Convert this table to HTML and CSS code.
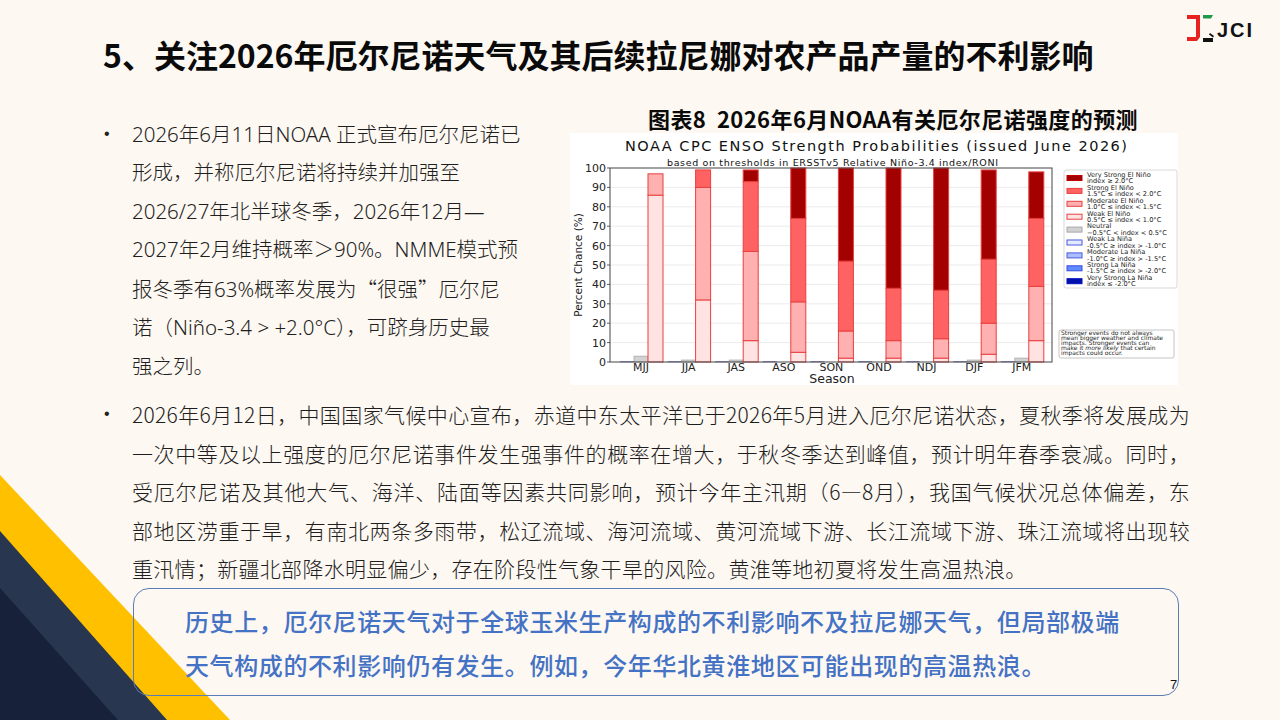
FILE: index.html
```html
<!DOCTYPE html>
<html lang="zh-CN">
<head>
<meta charset="utf-8">
<title>厄尔尼诺</title>
<link rel="stylesheet" href="styles.css">
</head>
<body>
<div class="slide">
  <svg class="deco" width="240" height="250" viewBox="0 0 240 250">
    <polygon points="0,5 230,250 0,250" fill="#FFC000"/>
    <polygon points="0,61 167,250 0,250" fill="#283650"/>
    <polygon points="0,118 118,250 0,250" fill="#17223a"/>
  </svg>

  <header class="top">
    <h1 class="title">5、关注2026年厄尔尼诺天气及其后续拉尼娜对农产品产量的不利影响</h1>
    <div class="logo">
      <svg class="logo-mark" width="28" height="30" viewBox="0 0 28 30">
        <path d="M1 2 H14 V24 L11 28 H1 V24 H10 V6 H1 Z" fill="#e8231f"/>
        <path d="M17 2 H27 L25 5.5 H17 Z" fill="#1f9a4a"/>
        <path d="M17 25 H27 V29 H17 Z" fill="#111"/>
        <path d="M24 20 L28 23 L27 24.5 L23 21.5 Z" fill="#111"/>
      </svg>
      <span class="logo-text">JCI</span>
    </div>
  </header>

  <section class="upper">
    <div class="left-col">
      <div class="item">
        <span class="dot">•</span>
        <p class="txt">2026年6月11日NOAA 正式宣布厄尔尼诺已<br>形成，并称厄尔尼诺将持续并加强至<br>2026/27年北半球冬季，2026年12月—<br>2027年2月维持概率＞90%。NMME模式预<br>报冬季有63%概率发展为<span class="cjk">“很强”</span>厄尔尼<br>诺（Niño-3.4 &gt; +2.0°C），可跻身历史最<br>强之列。</p>
      </div>
    </div>
    <figure class="figure">
      <figcaption class="cap">图表8&nbsp;&nbsp;2026年6月NOAA有关厄尔尼诺强度的预测</figcaption>
      <svg class="chart" width="608" height="252" viewBox="0 0 608 252" font-family="DejaVu Sans, sans-serif">
        <rect x="0" y="0" width="608" height="252" fill="#ffffff"/>
        <text x="306" y="18" font-size="14.5" text-anchor="middle" textLength="502" lengthAdjust="spacing" fill="#111">NOAA CPC ENSO Strength Probabilities (issued June 2026)</text>
        <text x="97" y="32.5" font-size="9.5" textLength="331" lengthAdjust="spacing" fill="#111">based on thresholds in ERSSTv5 Relative Niño-3.4 index/RONI</text>

        <g stroke="#e6e6e6" stroke-width="0.8">
          <line x1="40" y1="209.6" x2="482" y2="209.6"/>
          <line x1="40" y1="190.2" x2="482" y2="190.2"/>
          <line x1="40" y1="170.8" x2="482" y2="170.8"/>
          <line x1="40" y1="151.4" x2="482" y2="151.4"/>
          <line x1="40" y1="132" x2="482" y2="132"/>
          <line x1="40" y1="112.6" x2="482" y2="112.6"/>
          <line x1="40" y1="93.2" x2="482" y2="93.2"/>
          <line x1="40" y1="73.8" x2="482" y2="73.8"/>
          <line x1="40" y1="54.4" x2="482" y2="54.4"/>
        </g>

        <g font-size="11" text-anchor="end" fill="#222">
          <text x="36" y="233">0</text>
          <text x="36" y="213.6">10</text>
          <text x="36" y="194.2">20</text>
          <text x="36" y="174.8">30</text>
          <text x="36" y="155.4">40</text>
          <text x="36" y="136">50</text>
          <text x="36" y="116.6">60</text>
          <text x="36" y="97.2">70</text>
          <text x="36" y="77.8">80</text>
          <text x="36" y="58.4">90</text>
          <text x="36" y="39">100</text>
        </g>
        <g stroke="#333" stroke-width="0.8">
          <line x1="37" y1="229" x2="40" y2="229"/>
          <line x1="37" y1="209.6" x2="40" y2="209.6"/>
          <line x1="37" y1="190.2" x2="40" y2="190.2"/>
          <line x1="37" y1="170.8" x2="40" y2="170.8"/>
          <line x1="37" y1="151.4" x2="40" y2="151.4"/>
          <line x1="37" y1="132" x2="40" y2="132"/>
          <line x1="37" y1="112.6" x2="40" y2="112.6"/>
          <line x1="37" y1="93.2" x2="40" y2="93.2"/>
          <line x1="37" y1="73.8" x2="40" y2="73.8"/>
          <line x1="37" y1="54.4" x2="40" y2="54.4"/>
          <line x1="37" y1="35" x2="40" y2="35"/>
        </g>
        <text x="12" y="132" font-size="10.5" text-anchor="middle" transform="rotate(-90 12 132)" fill="#222">Percent Chance (%)</text>

        <g fill="#6a6ad0">
          <rect x="50" y="228.3" width="14" height="0.9"/>
          <rect x="97.6" y="228.3" width="14" height="0.9"/>
          <rect x="145.2" y="228.3" width="14" height="0.9"/>
          <rect x="192.8" y="228.3" width="14" height="0.9"/>
          <rect x="240.4" y="228.3" width="14" height="0.9"/>
          <rect x="288" y="228.3" width="14" height="0.9"/>
          <rect x="335.6" y="228.3" width="14" height="0.9"/>
          <rect x="383.2" y="228.3" width="14" height="0.9"/>
          <rect x="430.8" y="228.3" width="14" height="0.9"/>
        </g>
        <g fill="#d2d2d2" stroke="#a8a8a8" stroke-width="0.8">
          <rect x="64" y="223.18" width="14" height="5.82"/>
          <rect x="111.6" y="227.06" width="14" height="1.94"/>
          <rect x="159.2" y="227.06" width="14" height="1.94"/>
          <rect x="397.2" y="227.06" width="14" height="1.94"/>
          <rect x="444.8" y="225.12" width="14" height="3.88"/>
        </g>
        <g stroke="#e8403f" stroke-width="1">
          <rect x="78" y="62.16" width="15" height="166.84" fill="#ffe3e3"/>
          <rect x="78" y="40.82" width="15" height="21.34" fill="#ffb0b0"/>

          <rect x="125.6" y="166.92" width="15" height="62.08" fill="#ffe3e3"/>
          <rect x="125.6" y="54.4" width="15" height="112.52" fill="#ffb0b0"/>
          <rect x="125.6" y="36.94" width="15" height="17.46" fill="#ff6262"/>

          <rect x="173.2" y="207.66" width="15" height="21.34" fill="#ffe3e3"/>
          <rect x="173.2" y="118.42" width="15" height="89.24" fill="#ffb0b0"/>
          <rect x="173.2" y="48.58" width="15" height="69.84" fill="#ff6262"/>
          <rect x="173.2" y="36.94" width="15" height="11.64" fill="#a30000"/>

          <rect x="220.8" y="219.3" width="15" height="9.7" fill="#ffe3e3"/>
          <rect x="220.8" y="168.86" width="15" height="50.44" fill="#ffb0b0"/>
          <rect x="220.8" y="85.44" width="15" height="83.42" fill="#ff6262"/>
          <rect x="220.8" y="35" width="15" height="50.44" fill="#a30000"/>

          <rect x="268.4" y="225.12" width="15" height="3.88" fill="#ffe3e3"/>
          <rect x="268.4" y="197.96" width="15" height="27.16" fill="#ffb0b0"/>
          <rect x="268.4" y="128.12" width="15" height="69.84" fill="#ff6262"/>
          <rect x="268.4" y="35" width="15" height="93.12" fill="#a30000"/>

          <rect x="316" y="225.12" width="15" height="3.88" fill="#ffe3e3"/>
          <rect x="316" y="207.66" width="15" height="17.46" fill="#ffb0b0"/>
          <rect x="316" y="155.28" width="15" height="52.38" fill="#ff6262"/>
          <rect x="316" y="35" width="15" height="120.28" fill="#a30000"/>

          <rect x="363.6" y="225.12" width="15" height="3.88" fill="#ffe3e3"/>
          <rect x="363.6" y="205.72" width="15" height="19.4" fill="#ffb0b0"/>
          <rect x="363.6" y="157.22" width="15" height="48.5" fill="#ff6262"/>
          <rect x="363.6" y="35" width="15" height="122.22" fill="#a30000"/>

          <rect x="411.2" y="221.24" width="15" height="7.76" fill="#ffe3e3"/>
          <rect x="411.2" y="190.2" width="15" height="31.04" fill="#ffb0b0"/>
          <rect x="411.2" y="126.18" width="15" height="64.02" fill="#ff6262"/>
          <rect x="411.2" y="36.94" width="15" height="89.24" fill="#a30000"/>

          <rect x="458.8" y="207.66" width="15" height="21.34" fill="#ffe3e3"/>
          <rect x="458.8" y="153.34" width="15" height="54.32" fill="#ffb0b0"/>
          <rect x="458.8" y="85.44" width="15" height="67.9" fill="#ff6262"/>
          <rect x="458.8" y="38.88" width="15" height="46.56" fill="#a30000"/>
        </g>

        <rect x="40" y="35" width="442" height="194" fill="none" stroke="#444" stroke-width="1"/>

        <g font-size="11" text-anchor="middle" fill="#222">
          <text x="71" y="237.5">MJJ</text>
          <text x="118.6" y="237.5">JJA</text>
          <text x="166.2" y="237.5">JAS</text>
          <text x="213.8" y="237.5">ASO</text>
          <text x="261.4" y="237.5">SON</text>
          <text x="309" y="237.5">OND</text>
          <text x="356.6" y="237.5">NDJ</text>
          <text x="404.2" y="237.5">DJF</text>
          <text x="451.8" y="237.5">JFM</text>
        </g>
        <text x="262" y="250" font-size="12.5" text-anchor="middle" fill="#222">Season</text>

        <rect x="494" y="37" width="113" height="118" rx="2" fill="#fff" stroke="#cfcfcf" stroke-width="0.8"/>
        <g stroke-width="1">
          <rect x="497" y="42.5" width="15" height="5" fill="#a30000" stroke="#c00000"/>
          <rect x="497" y="55.4" width="15" height="5" fill="#ff6262" stroke="#e8403f"/>
          <rect x="497" y="68.3" width="15" height="5" fill="#ffb0b0" stroke="#e8403f"/>
          <rect x="497" y="81.2" width="15" height="5" fill="#ffe3e3" stroke="#e8403f"/>
          <rect x="497" y="94.1" width="15" height="5" fill="#d2d2d2" stroke="#a8a8a8"/>
          <rect x="497" y="107" width="15" height="5" fill="#e4eaff" stroke="#4a5ae0"/>
          <rect x="497" y="119.9" width="15" height="5" fill="#aabfff" stroke="#4a5ae0"/>
          <rect x="497" y="132.8" width="15" height="5" fill="#5f8cff" stroke="#3a4ae0"/>
          <rect x="497" y="145.7" width="15" height="5" fill="#0010a8" stroke="#0010c8"/>
        </g>
        <g font-size="6.6" fill="#222">
          <text x="517" y="43.8">Very Strong El Niño</text>
          <text x="517" y="50.1">index ≥ 2.0°C</text>
          <text x="517" y="56.7">Strong El Niño</text>
          <text x="517" y="63">1.5°C ≤ index &lt; 2.0°C</text>
          <text x="517" y="69.6">Moderate El Niño</text>
          <text x="517" y="75.9">1.0°C ≤ index &lt; 1.5°C</text>
          <text x="517" y="82.5">Weak El Niño</text>
          <text x="517" y="88.8">0.5°C ≤ index &lt; 1.0°C</text>
          <text x="517" y="95.4">Neutral</text>
          <text x="517" y="101.7">−0.5°C &lt; index &lt; 0.5°C</text>
          <text x="517" y="108.3">Weak La Niña</text>
          <text x="517" y="114.6">-0.5°C ≥ index &gt; -1.0°C</text>
          <text x="517" y="121.2">Moderate La Niña</text>
          <text x="517" y="127.5">-1.0°C ≥ index &gt; -1.5°C</text>
          <text x="517" y="134.1">Strong La Niña</text>
          <text x="517" y="140.4">-1.5°C ≥ index &gt; -2.0°C</text>
          <text x="517" y="147">Very Strong La Niña</text>
          <text x="517" y="153.3">index ≤ -2.0°C</text>
        </g>

        <rect x="489" y="197" width="115" height="28" rx="2" fill="#fff" stroke="#b5b5b5" stroke-width="0.8"/>
        <g font-size="6" fill="#222">
          <text x="491" y="202.4">Stronger events do not always</text>
          <text x="491" y="207.4">mean bigger weather and climate</text>
          <text x="491" y="212.4">impacts. Stronger events can</text>
          <text x="491" y="217.4">make it <tspan font-style="italic">more likely</tspan> that certain</text>
          <text x="491" y="222.4">impacts could occur.</text>
        </g>
      </svg>
    </figure>
  </section>

  <section class="lower">
    <span class="dot">•</span>
    <p class="txt wide">
      <span class="jl">2026年6月12日，中国国家气候中心宣布，赤道中东太平洋已于2026年5月进入厄尔尼诺状态，夏秋季将发展成为</span>
      <span class="jl">一次中等及以上强度的厄尔尼诺事件发生强事件的概率在增大，于秋冬季达到峰值，预计明年春季衰减。同时，</span>
      <span class="jl">受厄尔尼诺及其他大气、海洋、陆面等因素共同影响，预计今年主汛期（6—8月），我国气候状况总体偏差，东</span>
      <span class="jl">部地区涝重于旱，有南北两条多雨带，松辽流域、海河流域、黄河流域下游、长江流域下游、珠江流域将出现较</span>
      <span class="ll">重汛情；新疆北部降水明显偏少，存在阶段性气象干旱的风险。黄淮等地初夏将发生高温热浪。</span>
    </p>
  </section>

  <div class="callout">
    <p class="callout-text">历史上，厄尔尼诺天气对于全球玉米生产构成的不利影响不及拉尼娜天气，但局部极端<br>天气构成的不利影响仍有发生。例如，今年华北黄淮地区可能出现的高温热浪。</p>
  </div>

  <div class="page-num">7</div>
</div>
</body>
</html>
```

FILE: styles.css
```css
html, body {
  margin: 0;
  padding: 0;
  background: #fdf8f2;
}

.slide {
  position: relative;
  z-index: 0;
  width: 1280px;
  height: 720px;
  overflow: hidden;
  background: #fdf8f2;
  font-family: "Noto Sans CJK SC", "Noto Sans", sans-serif;
  color: #1e1e1e;
}

.deco {
  position: absolute;
  left: 0;
  bottom: 0;
  z-index: -1;
  display: block;
}

.top {
  display: flex;
  justify-content: space-between;
  align-items: flex-start;
  height: 80px;
  padding: 0 26px 0 103px;
}

.title {
  margin: 34px 0 0;
  font-size: 32px;
  line-height: 40px;
  font-weight: 700;
  color: #0a0a0a;
  white-space: nowrap;
}

.logo {
  margin-top: 13px;
  display: flex;
  align-items: center;
  gap: 3px;
}

.logo-mark {
  display: block;
}

.logo-text {
  font-family: "Liberation Sans", Arial, sans-serif;
  font-weight: 700;
  font-size: 20px;
  letter-spacing: 2px;
  color: #111;
  margin-top: 5px;
}

.upper {
  display: flex;
  margin-top: 24px;
  padding-left: 104px;
}

.left-col {
  width: 466px;
  flex: none;
  padding-top: 10.75px;
}

.item {
  display: flex;
}

.dot {
  width: 28px;
  flex: none;
  font-family: "Liberation Sans", Arial, sans-serif;
  font-size: 16px;
  line-height: 38.5px;
  color: #222;
}

.txt {
  margin: 0;
  font-family: "Noto Sans", "Noto Sans CJK SC", sans-serif;
  font-size: 20.5px;
  line-height: 38.5px;
  font-weight: 300;
  white-space: nowrap;
}

.cjk {
  font-family: "Noto Sans CJK SC", sans-serif;
}

.figure {
  margin: 0;
  width: 608px;
  flex: none;
}

.cap {
  margin: 0 0 1px 78px;
  height: 28px;
  font-size: 22px;
  line-height: 28px;
  font-weight: 700;
  letter-spacing: 0.4px;
  color: #0a0a0a;
  white-space: nowrap;
}

.chart {
  display: block;
  width: 608px;
  height: 252px;
}

.lower {
  display: flex;
  margin-top: 9.75px;
  padding-left: 104px;
}

.wide {
  width: 1058px;
  font-family: "Noto Sans CJK SC", "Noto Sans", sans-serif;
  font-size: 21px;
  letter-spacing: 0.3px;
  white-space: normal;
}

.jl {
  display: block;
  text-align: justify;
  text-align-last: justify;
}

.ll {
  display: block;
  text-align: left;
}

.callout {
  margin-left: 133px;
  width: 1046px;
  height: 108px;
  box-sizing: border-box;
  border: 1px solid #5b7db5;
  border-radius: 16px;
  padding: 10px 20px 0 51px;
}

.callout-text {
  margin: 0;
  font-size: 24px;
  line-height: 44px;
  font-weight: 500;
  letter-spacing: 0.6px;
  color: #4472c4;
  white-space: nowrap;
}

.page-num {
  position: absolute;
  left: 1170px;
  top: 677px;
  font-family: "Liberation Sans", Arial, sans-serif;
  font-size: 13px;
  color: #111;
}
```
